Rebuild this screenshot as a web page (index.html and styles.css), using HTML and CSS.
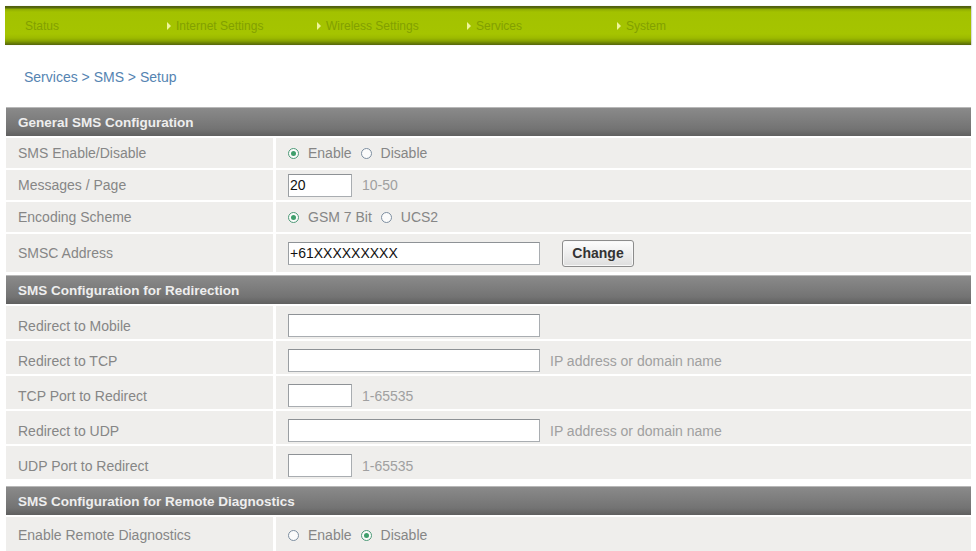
FILE: index.html
```html
<!DOCTYPE html>
<html>
<head>
<meta charset="utf-8">
<title>Services &gt; SMS &gt; Setup</title>
<link rel="stylesheet" href="styles.css">
</head>
<body>
<div class="page">
  <nav class="topnav">
    <span class="navitem first">Status</span>
    <span class="navitem"><span class="arrow"></span>Internet Settings</span>
    <span class="navitem"><span class="arrow"></span>Wireless Settings</span>
    <span class="navitem"><span class="arrow"></span>Services</span>
    <span class="navitem"><span class="arrow"></span>System</span>
  </nav>

  <div class="crumb">Services &gt; SMS &gt; Setup</div>

  <section class="panel general">
    <div class="phead">General SMS Configuration</div>
    <div class="row">
      <div class="lbl">SMS Enable/Disable</div>
      <div class="val">
        <span class="radio"><span class="dot on"></span>Enable</span>
        <span class="radio"><span class="dot"></span>Disable</span>
      </div>
    </div>
    <div class="row">
      <div class="lbl">Messages / Page</div>
      <div class="val"><input class="txt small" type="text" value="20"><span class="hint">10-50</span></div>
    </div>
    <div class="row">
      <div class="lbl">Encoding Scheme</div>
      <div class="val">
        <span class="radio"><span class="dot on"></span>GSM 7 Bit</span>
        <span class="radio"><span class="dot"></span>UCS2</span>
      </div>
    </div>
    <div class="row tall">
      <div class="lbl">SMSC Address</div>
      <div class="val"><input class="txt wide" type="text" value="+61XXXXXXXXX"><button class="btn" type="button">Change</button></div>
    </div>
  </section>

  <section class="panel redir">
    <div class="phead">SMS Configuration for Redirection</div>
    <div class="row">
      <div class="lbl">Redirect to Mobile</div>
      <div class="val"><input class="txt wide" type="text"></div>
    </div>
    <div class="row">
      <div class="lbl">Redirect to TCP</div>
      <div class="val"><input class="txt wide" type="text"><span class="hint">IP address or domain name</span></div>
    </div>
    <div class="row">
      <div class="lbl">TCP Port to Redirect</div>
      <div class="val"><input class="txt small" type="text"><span class="hint">1-65535</span></div>
    </div>
    <div class="row">
      <div class="lbl">Redirect to UDP</div>
      <div class="val"><input class="txt wide" type="text"><span class="hint">IP address or domain name</span></div>
    </div>
    <div class="row">
      <div class="lbl">UDP Port to Redirect</div>
      <div class="val"><input class="txt small" type="text"><span class="hint">1-65535</span></div>
    </div>
  </section>

  <section class="panel diag">
    <div class="phead">SMS Configuration for Remote Diagnostics</div>
    <div class="row">
      <div class="lbl">Enable Remote Diagnostics</div>
      <div class="val">
        <span class="radio"><span class="dot"></span>Enable</span>
        <span class="radio"><span class="dot on"></span>Disable</span>
      </div>
    </div>
  </section>
</div>
</body>
</html>
```

FILE: styles.css
```css
html, body {
  margin: 0;
  padding: 0;
  background: #ffffff;
  font-family: "Liberation Sans", Arial, sans-serif;
}

.page {
  padding: 6px 5px 0 5px;
}

/* Top navigation bar */
.topnav {
  height: 39px;
  display: flex;
  align-items: center;
  padding-left: 12px;
  background: linear-gradient(to bottom,
    #4f5e0c 0px, #5a6a0e 2px, #8eab02 3px, #a3c200 6px,
    #a5c400 28px, #9cba00 32px, #87a200 35px, #6c8204 37px, #55640c 39px);
  box-shadow: 1px 0 1px rgba(0,0,0,0.15);
}

.navitem {
  width: 150px;
  display: flex;
  align-items: center;
  font-size: 12px;
  color: #82a000;
  padding-top: 1px;
}

.navitem.first {
  padding-left: 8px;
  width: 142px;
}

.arrow {
  width: 0;
  height: 0;
  border-left: 4px solid #eef59c;
  border-top: 4px solid transparent;
  border-bottom: 4px solid transparent;
  margin-right: 5px;
}

/* Breadcrumb */
.crumb {
  margin: 24px 0 22px 19px;
  font-size: 14px;
  line-height: 16px;
  color: #5584b2;
}

/* Panels */
.panel {
  margin-left: 1px;
}

.panel + .panel {
  margin-top: 3px;
}

.panel.diag {
  margin-top: 7px;
}

.phead {
  height: 29px;
  line-height: 29px;
  padding-left: 12px;
  font-size: 13.5px;
  font-weight: bold;
  color: #eeeeee;
  background: linear-gradient(to bottom, #8a8a8a 0px, #7e7e7e 40%, #737373 75%, #5f5f5f 100%);
  border-top: 1px solid #b8b8b8;
  box-sizing: border-box;
}

.row {
  display: grid;
  grid-template-columns: 267px 1fr;
  column-gap: 3px;
  margin-top: 2px;
  height: 30px;
}

.row.tall {
  height: 38px;
}

.redir .row {
  height: 33px;
}

.redir .lbl, .redir .val {
  padding-top: 6px;
}

.diag .row {
  height: 36px;
}

.lbl, .val {
  box-sizing: border-box;
  background: #efeeec;
  display: flex;
  align-items: center;
}

.lbl {
  padding-left: 12px;
  font-size: 14px;
  color: #868686;
}

.val {
  padding-left: 12px;
  font-size: 14px;
  color: #868686;
}

/* Radios */
.radio {
  display: inline-flex;
  align-items: center;
  margin-right: 9px;
}

.dot {
  box-sizing: border-box;
  width: 11px;
  height: 11px;
  border: 1px solid #7d8ea0;
  border-radius: 50%;
  background: #fbfbfb;
  margin-right: 9px;
  position: relative;
}

.dot.on {
  border-color: #4e9a78;
}

.dot.on::after {
  content: "";
  position: absolute;
  left: 2px;
  top: 2px;
  width: 5px;
  height: 5px;
  border-radius: 50%;
  background: #3f9f6c;
}

/* Text inputs */
.txt {
  box-sizing: border-box;
  height: 23px;
  border: 1px solid #a9adb1;
  border-top-color: #8e9296;
  border-left-color: #9a9ea2;
  background: #ffffff;
  font-family: "Liberation Sans", Arial, sans-serif;
  font-size: 14px;
  color: #111111;
  padding: 0 1px;
  margin: 0;
  outline: none;
}

.txt.small {
  width: 64px;
}

.txt.wide {
  width: 252px;
}

.hint {
  margin-left: 10px;
  color: #a0a0a0;
}

/* Button */
.btn {
  box-sizing: border-box;
  margin-left: 22px;
  width: 72px;
  height: 27px;
  border: 1px solid #8c8c8c;
  border-radius: 3px;
  background: linear-gradient(to bottom, #fdfdfd, #ebebeb 60%, #dedede);
  box-shadow: inset 0 0 0 1px #f8f8f8;
  font-family: "Liberation Sans", Arial, sans-serif;
  font-size: 14px;
  font-weight: bold;
  color: #333333;
  padding: 0;
}
```
